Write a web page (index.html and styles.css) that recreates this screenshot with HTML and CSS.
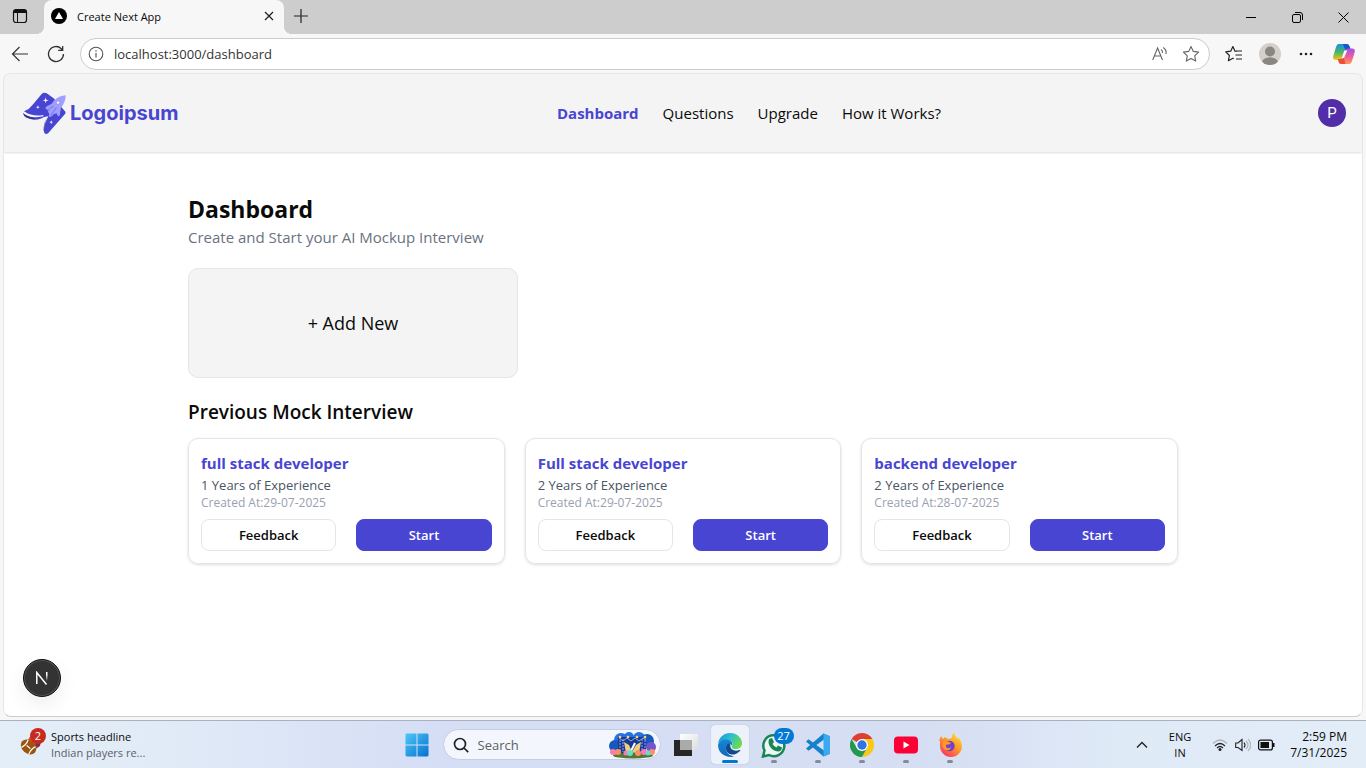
FILE: index.html
```html
<!DOCTYPE html>
<html lang="en">
<head>
<meta charset="utf-8">
<meta name="viewport" content="width=device-width, initial-scale=1">
<title>Create Next App</title>
<link rel="stylesheet" href="styles.css">
</head>
<body>
<div class="tabbar">
  <button class="tab-actions" aria-label="Tab actions"><svg width="16" height="16" viewBox="0 0 16 16"><rect x="1.5" y="1.500" width="13" height="13" rx="2.500" fill="none" stroke="#111" stroke-width="1.200"/><path d="M1.500 5V4a2.500 2.500 0 0 1 2.500-2.500h8a2.500 2.500 0 0 1 2.500 2.500v1z" fill="#111"/><path d="M5.500 5v9.500" stroke="#111"/></svg></button>
  <div class="tab">
    <svg width="16" height="16" viewBox="0 0 16 16"><circle cx="8" cy="8" r="8" fill="#000"/><path d="M8 4l4 7H4z" fill="#fff"/></svg>
    <span class="tab-title">Create Next App</span>
    <button class="tab-close" aria-label="Close tab"><svg width="10" height="10" viewBox="0 0 10 10"><path d="M1 1l8 8M9 1l-8 8" stroke="#222" stroke-width="1.300"/></svg></button>
  </div>
  <button class="new-tab" aria-label="New tab"><svg width="14" height="14" viewBox="0 0 14 14"><path d="M7 0v14M0 7h14" stroke="#222" stroke-width="1.200"/></svg></button>
  <div class="window-controls">
    <button aria-label="Minimize"><svg width="10" height="10" viewBox="0 0 10 10"><path d="M0 5.500h10" stroke="#000"/></svg></button>
    <button aria-label="Restore"><svg width="11" height="11" viewBox="0 0 11 11" fill="none" stroke="#000"><rect x=".5" y="2.500" width="8" height="8" rx="1.500"/><path d="M3 .5h5a2.500 2.500 0 0 1 2.500 2.500v5"/></svg></button>
    <button aria-label="Close window"><svg width="11" height="11" viewBox="0 0 11 11"><path d="M.5.5l10 10M10.500.5l-10 10" stroke="#000"/></svg></button>
  </div>
</div>
<div class="toolbar">
  <button class="tool" aria-label="Back"><svg width="18" height="16" viewBox="0 0 18 16" fill="none" stroke="#333" stroke-width="1.200"><path d="M17 8H1M8.500 1L1.500 8l7 7"/></svg></button>
  <button class="tool" aria-label="Refresh"><svg width="18" height="18" viewBox="0 0 18 18" fill="none" stroke="#333" stroke-width="1.300"><path d="M16.500 9a7.500 7.500 0 1 1-2.200-5.300L15.500 5M15.700 1v4.300h-4.500"/></svg></button>
  <div class="address">
    <svg width="16" height="16" viewBox="0 0 16 16"><circle cx="8" cy="8" r="6.800" fill="none" stroke="#555" stroke-width="1.100"/><path d="M8 7v4.500" stroke="#555" stroke-width="1.200"/><circle cx="8" cy="5" r=".8" fill="#555"/></svg>
    <input class="address-input" type="text" aria-label="Address" value="localhost:3000/dashboard">
    <button aria-label="Read aloud"><svg width="16" height="16" viewBox="0 0 16 16" fill="none" stroke="#666" stroke-width="1.100"><path d="M.7 14L5.600 2 10.500 14M2.400 10h6.400M9 3.500q1.800 1.200 1.600 3.500M11.300 1.500q3.500 2.500 2.700 6.500"/></svg></button>
    <button aria-label="Add to favorites"><svg width="18" height="18" viewBox="0 0 18 18" fill="none" stroke="#666" stroke-width="1.100" stroke-linejoin="round"><path d="M9 1.500l2.300 4.900 5.300.7-3.900 3.700 1 5.300L9 13.500l-4.700 2.600 1-5.300L1.400 7.100l5.300-.7z"/></svg></button>
  </div>
  <button class="tool" aria-label="Favorites"><svg width="18" height="18" viewBox="0 0 18 18" fill="none" stroke="#222" stroke-width="1.200" stroke-linejoin="round"><path d="M11.500 6.500L10 6.200 7.900 1.500 5.700 6.200l-5 .7 3.700 3.600-1 5.200 4.500-2.400.8.4M11 6h6M10.500 10h6.500M11 14h6"/></svg></button>
  <button class="tool" aria-label="Profile"><svg width="22" height="22" viewBox="0 0 22 22"><clipPath id="pc"><circle cx="11" cy="11" r="11"/></clipPath><g clip-path="url(#pc)"><path fill="#d3d0cc" d="M0 0h22v22H0z"/><circle cx="11" cy="8.500" r="5" fill="#898582"/><ellipse cx="11" cy="19.500" rx="8" ry="5.200" fill="#898582"/></g></svg></button>
  <button class="tool" aria-label="More"><svg width="14" height="4" viewBox="0 0 14 4" fill="#222"><circle cx="2" cy="2" r="1.300"/><circle cx="7" cy="2" r="1.300"/><circle cx="12" cy="2" r="1.300"/></svg></button>
  <button class="tool copilot" aria-label="Copilot"><svg width="22" height="20" viewBox="0 0 22 20">
    <defs><linearGradient id="cl" x2="0" y2="1"><stop offset="0" stop-color="#1b8fe8"/><stop offset=".5" stop-color="#46b36a"/><stop offset="1" stop-color="#f6c614"/></linearGradient><linearGradient id="cr" x2="0" y2="1"><stop offset="0" stop-color="#a84bec"/><stop offset=".55" stop-color="#ee5f9a"/><stop offset="1" stop-color="#ff9a4c"/></linearGradient></defs>
    <path fill="url(#cl)" d="M5.500 0H15L10.500 13Q9.500 16 7.500 16H3Q-.8 16 .3 12L3 3Q4 0 5.500 0z"/><path fill="#1556cf" d="M10 0h4q2 0 2.700 2.500L17.700 6H14q-2 0-2.500-2z"/><path fill="url(#cr)" d="M16.500 20H8.500L12 8Q13 4.500 15 4.500h4q3.600 0 2.600 4L19 17q-1 3-2.500 3z"/><path fill="#ee4d38" d="M12.500 20H8q-2 0-2.600-2.500L5 15h3q2 0 2.600-2z"/><path fill="#f7f7f7" d="M11.300 6.500h3L11 14H8.700z"/></svg></button>
</div>

<div class="page">
  <header class="site-header">
    <a class="logo" href="#"><svg width="44" height="43" viewBox="5 4 132 129">
      <path fill="#4845d2" d="M11 62Q28 55 37 42L64 10q7-7 15-2l21 15 34 39q3 4 0 8L84 127q-6 6-12 0-5-18 12-50-24 6-50-3-14-4-23-12z"/>
      <path fill="#4845d2" d="M8 67q14 12 34 13 22 1 38-7-18 15-40 14Q10 84 8 67z"/>
      <path fill="none" stroke="#f8f8fc" stroke-width="4" d="M11 65q26 16 58 10"/>
      <path fill="#34335f" d="M8 67q14 14 36 15l-3 3Q14 84 8 67zM80 80q-12 29-8 46-7-16 8-46z"/>
      <path fill="#a09eff" d="M136 14q-28 2-42 25L77 48q-5 6 5 9 0 8 5 13-4 8 2 9 8-1 10-8l10-3q2 12 9 7l4-24q14-16 14-37z"/>
      <path d="M83 62q10-17 17-13M91 75l17-24" fill="none" stroke="#7371ee" stroke-width="3"/>
      <circle cx="113" cy="36" r="5" fill="#fff" stroke="#8482f3" stroke-width="2"/>
      <path fill="#fff" d="M76 20l2 7 7 2-7 2-2 7-2-7-7-2 7-2zM53 44l1 4 4 1-4 2-1 4-2-4-4-2 4-1zM93 89l1 4 4 1-4 2-1 4-2-4-4-2 4-1z"/></svg><span>Logoipsum</span></a>
    <nav class="nav"><a class="active" href="#">Dashboard</a><a href="#">Questions</a><a href="#">Upgrade</a><a href="#">How it Works?</a></nav>
    <button class="user" aria-label="Account">P</button>
  </header>
  <main class="main">
    <h1 class="title">Dashboard</h1>
    <p class="subtitle">Create and Start your AI Mockup Interview</p>
    <div class="add-grid"><button class="add-new">+ Add New</button></div>
    <h2 class="section-title">Previous Mock Interview</h2>
    <div class="cards">
      <article class="card"><h3>full stack developer</h3><p class="years">1 Years of Experience</p><p class="created">Created At:29-07-2025</p><div class="actions"><button class="btn">Feedback</button><button class="btn primary">Start</button></div></article>
      <article class="card"><h3>Full stack developer</h3><p class="years">2 Years of Experience</p><p class="created">Created At:29-07-2025</p><div class="actions"><button class="btn">Feedback</button><button class="btn primary">Start</button></div></article>
      <article class="card"><h3>backend developer</h3><p class="years">2 Years of Experience</p><p class="created">Created At:28-07-2025</p><div class="actions"><button class="btn">Feedback</button><button class="btn primary">Start</button></div></article>
    </div>
  </main>
  <button class="dev-badge" aria-label="Open Next.js Dev Tools"><svg width="14" height="14" viewBox="0 0 14 14" fill="none" stroke-width="1.500"><defs><linearGradient id="ng" x2="0" y2="1"><stop offset=".3" stop-color="#fff"/><stop offset="1" stop-color="#fff" stop-opacity="0"/></linearGradient></defs><path d="M1.800 13V1.500L11.500 13.500" stroke="#fff"/><path fill="url(#ng)" d="M11 1h1.500v9H11z"/></svg></button>
</div>

<footer class="taskbar">
  <button class="widget">
    <span class="widget-icon"><svg width="25" height="28" viewBox="0 0 25 28"><path fill="#d9511f" d="M7 13l5-7 9 6-2 7-7 4z"/><path fill="#7b2d55" d="M15 20l5-2 1-5-5 1z"/><g transform="rotate(42 8.500 19)"><ellipse cx="8.500" cy="19" rx="8.500" ry="6.500" fill="#9a560f"/><path d="M3.500 14q2 5 0 10M13.500 14q-2 5 0 10M6 19h5" fill="none" stroke="#fff" stroke-width="1.200"/></g></svg><span class="count red">2</span></span>
    <span class="widget-text"><span>Sports headline</span><span class="muted">Indian players re...</span></span>
  </button>
  <div class="apps">
    <button class="app" aria-label="Start"><svg width="24" height="24" viewBox="0 0 24 24"><defs><linearGradient id="wg" x2="1" y2="1"><stop offset="0" stop-color="#4cc8f8"/><stop offset="1" stop-color="#0671ce"/></linearGradient></defs><path fill="url(#wg)" d="M1.500.5h10v11h-11v-10zM12.500.5h10l1 1v10h-11zM.5 12.500h11v11h-10l-1-1zM12.500 12.500h11v10l-1 1h-10z"/></svg></button>
    <label class="search"><svg width="16" height="16" viewBox="0 0 16 16" fill="none" stroke="#222" stroke-width="1.700"><circle cx="7" cy="7" r="5.500"/><path d="M11 11l4.200 4.200"/></svg><input type="text" placeholder="Search" aria-label="Search">
      <svg width="49" height="28" viewBox="0 0 49 28"><g fill="#2472df"><circle cx="13" cy="9" r="7"/><circle cx="21" cy="6" r="5"/><circle cx="31" cy="7" r="6"/></g><g fill="#1459bb"><circle cx="39" cy="10" r="7"/><circle cx="7" cy="15" r="6"/></g><circle cx="43" cy="16" r="5" fill="#7255cf"/><path fill="#193a93" d="M10 6h28v17H10z"/><path d="M11 7l4 3 4-3 4 3 4-3 4 3 4-3 3 2" fill="none" stroke="#8fa6f0"/><path d="M12 6v17M15 8v13M34 8v13M37 6v17" fill="none" stroke="#8fa6f0" stroke-dasharray="2 1"/><g fill="#ffd566"><circle cx="12" cy="6" r="1.300"/><circle cx="20" cy="6" r="1.300"/><circle cx="29" cy="6" r="1.300"/><circle cx="37" cy="6" r="1.300"/></g><path fill="#eacf7f" d="M16 11l5 3 3 7 4-7 5-3-2 11H18z"/><path stroke="#fff" stroke-width="2" d="M23 20l4-8"/><ellipse cx="25" cy="24.500" rx="20" ry="3" fill="#527831"/><g fill="#ff78b4"><circle cx="5" cy="21" r="3"/><circle cx="18" cy="22" r="2.500"/><circle cx="36" cy="21" r="3"/></g><g fill="#ff8e65"><circle cx="10" cy="21" r="3"/><circle cx="30" cy="22" r="3"/><circle cx="44" cy="21" r="3"/></g><g fill="#60dfca"><circle cx="22" cy="22" r="3"/><circle cx="40" cy="22" r="2.500"/></g></svg></label>
    <button class="app" aria-label="Task view"><svg width="24" height="24" viewBox="0 0 24 24"><defs><linearGradient id="tw" x2="1" y2="1"><stop offset="0" stop-color="#fff"/><stop offset="1" stop-color="#ddd"/></linearGradient></defs><path fill="#272727" d="M0 7h18v16H0z"/><path fill="url(#tw)" d="M6 1h18v16H6z"/><path fill="#aaa" d="M6 7h12v10H6z"/></svg></button>
    <button class="app current" aria-label="Microsoft Edge"><svg width="24" height="24" viewBox="0 0 24 24"><defs><linearGradient id="eg" x2="1" y2=".5"><stop offset="0" stop-color="#168ad3"/><stop offset=".5" stop-color="#2bbfd4"/><stop offset="1" stop-color="#68db50"/></linearGradient><linearGradient id="eb" x2="0" y2="1"><stop offset="0" stop-color="#1287d8"/><stop offset="1" stop-color="#1768b5"/></linearGradient></defs><path fill="url(#eg)" d="M0 11C1 4 6 0 12 0c7 0 12 5 12 10 0 4-3 6-6.500 6-3 0-4.500-1.500-3.500-3 1.500-3-.5-6-5-6-4 0-8 2-9 4z"/><path fill="url(#eb)" d="M0 12C1 8 5 6 9 6.500c4 .3 6 3 5 6-3-3-7 0-6 4 1 5 6 7 9 7-9 2-17-3-17-11.500z"/><path fill="#114a8b" d="M10.500 10.500c-3 2-3.500 6-1 9 3 3 8 3 12.500-1.500.7-.7.3-1.400-.6-1-5 2-9.500-1-9-4 .1-1-.7-2.500-1.900-2.500z"/></svg></button>
    <button class="app running" aria-label="WhatsApp"><svg width="26" height="26" viewBox="0 0 26 26"><path d="M3.500 18.500A10.500 10.500 0 1 1 8 23l-6 1.500z" fill="#eef5f5" stroke="#168654" stroke-width="2.500"/><path fill="#168654" d="M8 7l3-1 2 4-1.500 2q1.500 2.500 4 3.500l1.500-2 4 2q-.5 4-4 4C11 19 6 13 8 7z"/></svg><span class="count blue">27</span></button>
    <button class="app running" aria-label="Visual Studio Code"><svg width="24" height="24" viewBox="0 0 24 24"><path fill="#1581cb" d="M17.500.5L24 3.300v17.400l-6.500 2.800L0 8.500 2.500 6.300 18 17.500V6.500L2.500 17.700 0 15.500z"/><path fill="#3aa9ee" d="M17.500.5L24 3.300v17.400l-6.500 2.800z"/></svg></button>
    <button class="app running" aria-label="Chrome"><svg width="24" height="24" viewBox="0 0 24 24"><path fill="#dd4032" d="M12 12L1.600 6A12 12 0 0 1 22.400 6z"/><path fill="#f8c919" d="M12 6h10.400A12 12 0 0 1 12 24l5.200-9z"/><path fill="#259850" d="M1.600 6L6.800 15 12 18l5-3-5 9A12 12 0 0 1 1.600 6z"/><circle cx="12" cy="12" r="6" fill="#fff"/><circle cx="12" cy="12" r="4.700" fill="#3075e6"/></svg></button>
    <button class="app running" aria-label="YouTube"><svg width="24" height="18" viewBox="0 0 24 18"><rect width="24" height="17" y=".5" rx="4" fill="#fc0036"/><path d="M9.500 5.500v7l6-3.500z" fill="#fff"/></svg></button>
    <button class="app running" aria-label="Firefox"><svg width="24" height="24" viewBox="0 0 24 24"><defs><linearGradient id="fg" x1=".9" x2=".2" y2="1"><stop offset="0" stop-color="#ffe838"/><stop offset=".5" stop-color="#ff942a"/><stop offset="1" stop-color="#f82c68"/></linearGradient></defs><path fill="url(#fg)" d="M1 8L3 3l2 3 2-2 3 2 4-1q-1-3 2-5 1 3 4 6l1-1q3 4 3 8a11 11 0 0 1-22 0q0-3 0-5z"/><circle cx="11.500" cy="13" r="5.200" fill="#7043c9"/><path fill="#ff9b25" d="M5 9q4-2 8 1l-2 1.500H8.500Q7 13 9 15q2 1 4-1-1 4-5 3-5-2-3-8z"/></svg></button>
  </div>
  <div class="tray">
    <button class="tray-up" aria-label="Hidden icons"><svg width="12" height="8" viewBox="0 0 12 8"><path d="M1 6.500l5-5 5 5" fill="none" stroke="#222" stroke-width="1.400"/></svg></button>
    <span class="lang">ENG<br>IN</span>
    <button class="status" aria-label="Network, volume and battery"><svg width="16" height="14" viewBox="0 0 16 14" fill="none" stroke-width="1.200"><path d="M1 5.500q7-7 14 0" stroke="#aab2ba"/><path d="M3 8q5-5 10 0M5 10q3-3 6 0" stroke="#222"/><circle cx="8" cy="11.500" r="1.500" fill="#222"/></svg><svg width="16" height="14" viewBox="0 0 16 14" fill="none" stroke="#222" stroke-width="1.100"><path d="M.7 5H3l4-3.500v11L3 9.500H.7zM9 4.500q2 2.500 0 5"/><path d="M11 3q4 4 0 8M13 1q5.500 6 0 12" stroke="#aab2ba"/></svg><svg width="17" height="12" viewBox="0 0 17 12"><rect x=".6" y="1.100" width="13.800" height="9.800" rx="2" fill="none" stroke="#111" stroke-width="1.200"/><path fill="#111" d="M2.500 3h8.500v6H2.500zM15 4h1.500v4H15z"/></svg></button>
    <time class="clock">2:59 PM<br>7/31/2025</time>
  </div>
</footer>
</body>
</html>
```
FILE: styles.css
```css
* { box-sizing: border-box; }
body, h1, h2, h3, p { margin: 0; }
body { display: flex; flex-direction: column; min-height: 100vh; background: #f7f7f7; color: #0a0a0a; font-family: "Segoe UI", "Open Sans", sans-serif; font-size: 15px; }
button, input { font: inherit; color: inherit; border: 0; padding: 0; background: none; }
a { color: inherit; text-decoration: none; }
svg { display: block; flex: none; }

.tabbar { display: flex; height: 34px; background: #cdcdcd; }
.tab-actions { display: grid; place-items: center; width: 44px; padding: 0 4px 2px 0; }
.tab { position: relative; display: flex; align-items: center; gap: 10px; width: 240px; padding: 0 10px 2px 7px; border-radius: 8px 8px 0 0; background: #f7f7f7; font-size: 11px; }
.tab::before, .tab::after { content: ""; position: absolute; bottom: 0; width: 8px; height: 8px; }
.tab::before { left: -8px; background: radial-gradient(circle at 0 0, #cdcdcd 8px, #f7f7f7 8px); }
.tab::after { right: -8px; background: radial-gradient(circle at 100% 0, #cdcdcd 8px, #f7f7f7 8px); }
.tab-title { flex: 1; }
.new-tab { display: grid; place-items: center; width: 34px; padding-bottom: 2px; }
.window-controls { display: flex; margin-left: auto; }
.window-controls button { display: grid; place-items: center; width: 46px; }

.toolbar { display: flex; align-items: center; height: 39px; padding: 0 2px; }
.tool { display: grid; place-items: center; width: 36px; height: 32px; }
.copilot { width: 40px; }
.address { display: flex; flex: 1; align-items: center; gap: 14px; height: 32px; margin: 0 6px; padding: 0 9px 0 7px; border: 1px solid #ccc; border-radius: 16px; background: #fff; }
.address-input { flex: 1; min-width: 0; margin-left: -4px; outline: 0; color: #333; font-size: 13px; }

.page { position: relative; flex: 1; margin: 0 3px 3px; border: 1px solid #e6e6e6; border-bottom-color: #ccc; border-radius: 8px; background: #fff; overflow: hidden; }
.site-header { display: flex; align-items: center; justify-content: space-between; height: 78px; padding: 0 16px 0 18px; background: #f4f4f4; box-shadow: 0 1px 2px #0002; }
.logo { display: flex; align-items: center; gap: 4px; width: 158px; color: #4845d2; font: 700 20px Inter, sans-serif; }
.nav { display: flex; gap: 24px; line-height: 24px; }
.nav .active { color: #4845d2; font-weight: 700; }
.user { width: 28px; height: 28px; border-radius: 50%; background: #512da8; color: #fff; font: 15px Roboto, sans-serif; }

.main { margin: 0 144px; padding: 40px; }
.title { font-size: 23px; font-weight: 700; line-height: 34px; }
.subtitle { color: #6a7282; line-height: 22px; }
.add-grid { display: grid; grid-template-columns: repeat(3, 1fr); margin: 20px 0; }
.add-new { height: 110px; border: 1px solid #e5e5e5; border-radius: 10px; background: #f4f4f4; font-size: 18px; }
.section-title { font-size: 19px; font-weight: 600; line-height: 28px; }
.cards { display: grid; grid-template-columns: repeat(3, 1fr); gap: 20px; margin-top: 12px; }
.card { padding: 12px; border: 1px solid #e5e5e5; border-radius: 10px; box-shadow: 0 1px 3px #0002; }
.card h3 { color: #4845d2; font-size: 15px; font-weight: 700; line-height: 24px; }
.years { color: #4a5565; font-size: 13px; line-height: 20px; }
.created { color: #99a1af; font-size: 12px; line-height: 16px; }
.actions { display: grid; grid-template-columns: 1fr 1fr; gap: 20px; margin-top: 8px; }
.btn { height: 32px; border: 1px solid #e5e5e5; border-radius: 8px; font-size: 13px; font-weight: 600; }
.primary { border-color: #4845d2; background: #4845d2; color: #fff; }
.dev-badge { position: absolute; left: 19px; bottom: 19px; display: grid; place-items: center; width: 38px; height: 38px; border: 1px solid #111; border-radius: 50%; background: #333; box-shadow: inset 0 0 0 1px #555, 0 8px 20px #0001; }

.taskbar { display: grid; grid-template-columns: 1fr auto 1fr; align-items: center; height: 48px; border-top: 1px solid #a9b1c1; background: linear-gradient(90deg, #e4eef8 0, #e1ebf7 12%, #d5def5 32%, #d6def3 68%, #dfeaf7 82%, #e2edf8); font-size: 11px; line-height: 16px; }
.widget { display: flex; align-items: center; gap: 6px; width: max-content; padding-left: 20px; text-align: left; }
.widget-icon { position: relative; padding-bottom: 6px; }
.widget-text { display: grid; }
.muted { color: #5c6168; }
.count { position: absolute; height: 16px; border-radius: 8px; color: #fff; text-align: center; }
.red { top: 0; right: -1px; width: 16px; background: #c72b20; }
.blue { top: 7px; right: 2px; width: 20px; background: #0078d4; }
.apps { display: flex; align-items: center; height: 47px; }
.app { position: relative; display: grid; place-items: center; width: 44px; height: 47px; }
.current::before { content: ""; position: absolute; inset: 4px 3px; border-radius: 4px; background: #edf1fa; box-shadow: 0 0 1px #8898b0; }
.app svg { position: relative; }
.running::after, .current::after { content: ""; position: absolute; bottom: 5px; width: 6px; height: 3px; border-radius: 2px; background: #858b96; justify-self: center; }
.current::after { width: 16px; background: #0078d4; }
.search { display: flex; align-items: center; gap: 9px; width: 218px; height: 31px; margin: 0 3px 0 4px; padding: 0 3px 0 9px; border: 1px solid #c4cee2; border-radius: 16px; background: #f3f6fd; }
.search input { flex: 1; min-width: 0; outline: 0; font-size: 13px; }
.search input::placeholder { color: #606060; opacity: 1; }
.tray { display: flex; align-items: center; justify-content: flex-end; padding-right: 19px; }
.lang { width: 44px; margin: 0 10px; text-align: center; }
.status { display: flex; align-items: center; gap: 7px; }
.clock { width: 72px; font-size: 12px; text-align: right; }
```
